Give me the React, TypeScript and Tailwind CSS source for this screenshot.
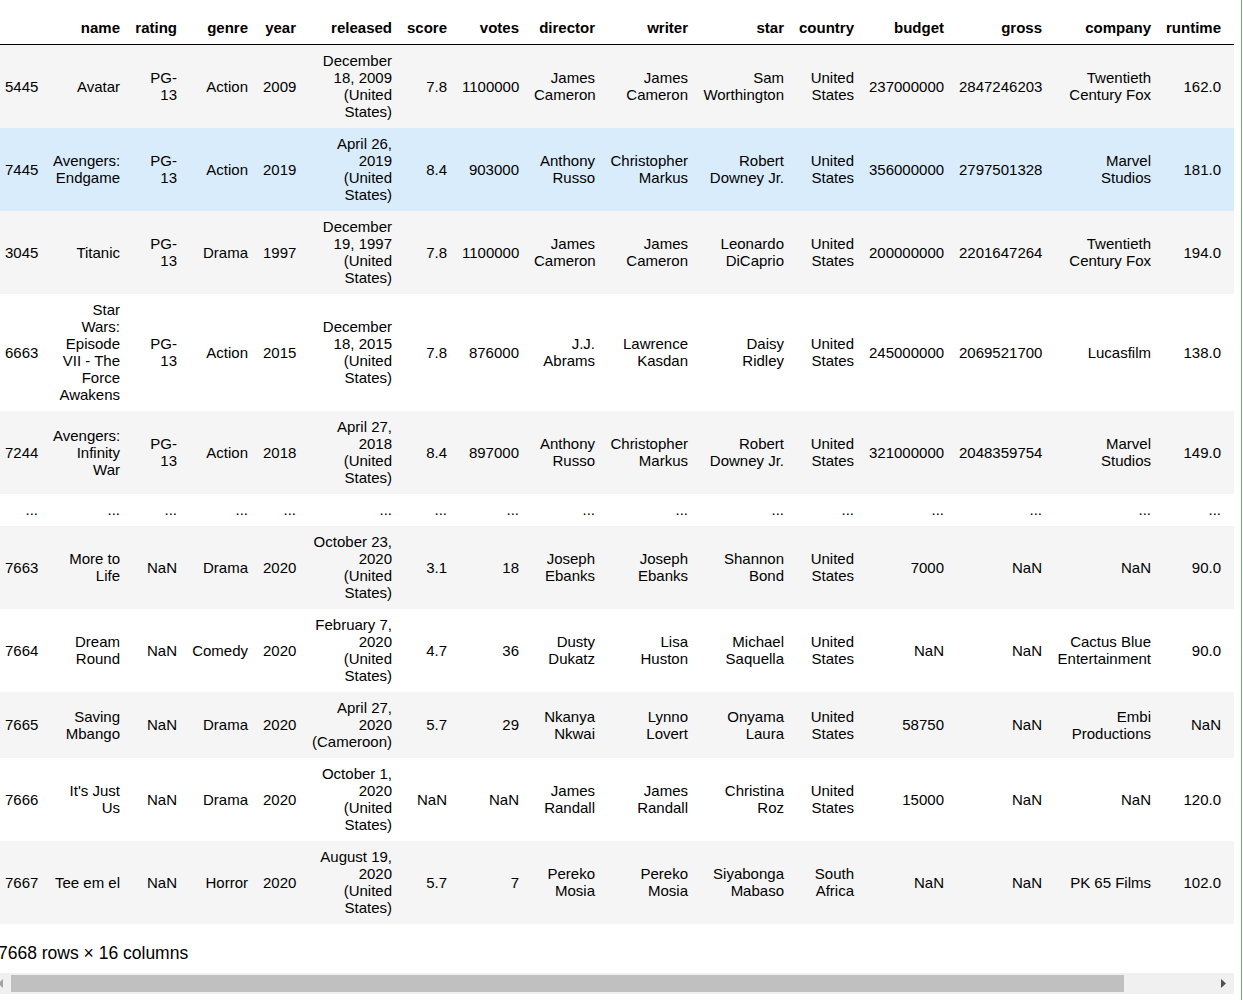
const widths = [45, 82, 57, 71, 48, 96, 55, 72, 76, 93, 96, 70, 90, 98, 109, 76];

const headers = ["", "name", "rating", "genre", "year", "released", "score", "votes", "director", "writer", "star", "country", "budget", "gross", "company", "runtime"];

const rows: string[][] = [
  ["5445", "Avatar", "PG-13", "Action", "2009", "December 18, 2009 (United States)", "7.8", "1100000", "James Cameron", "James Cameron", "Sam Worthington", "United States", "237000000", "2847246203", "Twentieth Century Fox", "162.0"],
  ["7445", "Avengers: Endgame", "PG-13", "Action", "2019", "April 26, 2019 (United States)", "8.4", "903000", "Anthony Russo", "Christopher Markus", "Robert Downey Jr.", "United States", "356000000", "2797501328", "Marvel Studios", "181.0"],
  ["3045", "Titanic", "PG-13", "Drama", "1997", "December 19, 1997 (United States)", "7.8", "1100000", "James Cameron", "James Cameron", "Leonardo DiCaprio", "United States", "200000000", "2201647264", "Twentieth Century Fox", "194.0"],
  ["6663", "Star Wars: Episode VII - The Force Awakens", "PG-13", "Action", "2015", "December 18, 2015 (United States)", "7.8", "876000", "J.J. Abrams", "Lawrence Kasdan", "Daisy Ridley", "United States", "245000000", "2069521700", "Lucasfilm", "138.0"],
  ["7244", "Avengers: Infinity War", "PG-13", "Action", "2018", "April 27, 2018 (United States)", "8.4", "897000", "Anthony Russo", "Christopher Markus", "Robert Downey Jr.", "United States", "321000000", "2048359754", "Marvel Studios", "149.0"],
  ["...", "...", "...", "...", "...", "...", "...", "...", "...", "...", "...", "...", "...", "...", "...", "..."],
  ["7663", "More to Life", "NaN", "Drama", "2020", "October 23, 2020 (United States)", "3.1", "18", "Joseph Ebanks", "Joseph Ebanks", "Shannon Bond", "United States", "7000", "NaN", "NaN", "90.0"],
  ["7664", "Dream Round", "NaN", "Comedy", "2020", "February 7, 2020 (United States)", "4.7", "36", "Dusty Dukatz", "Lisa Huston", "Michael Saquella", "United States", "NaN", "NaN", "Cactus Blue Entertainment", "90.0"],
  ["7665", "Saving Mbango", "NaN", "Drama", "2020", "April 27, 2020 (Cameroon)", "5.7", "29", "Nkanya Nkwai", "Lynno Lovert", "Onyama Laura", "United States", "58750", "NaN", "Embi Productions", "NaN"],
  ["7666", "It's Just Us", "NaN", "Drama", "2020", "October 1, 2020 (United States)", "NaN", "NaN", "James Randall", "James Randall", "Christina Roz", "United States", "15000", "NaN", "NaN", "120.0"],
  ["7667", "Tee em el", "NaN", "Horror", "2020", "August 19, 2020 (United States)", "5.7", "7", "Pereko Mosia", "Pereko Mosia", "Siyabonga Mabaso", "South Africa", "NaN", "NaN", "PK 65 Films", "102.0"],
];

function rowColor(i: number) {
  if (i === 1) return "bg-[#d9ecfc]";
  return i % 2 === 0 ? "bg-[#f5f5f5]" : "bg-white";
}

export default function App() {
  return (
    <div className="h-[1000px] w-[1242px] overflow-hidden border-r border-[#66bb6a] bg-white pt-[12px] font-['Liberation_Sans',Arial,sans-serif] text-[15px] leading-[17px] text-black">
      <table className="w-[1234px] table-fixed border-collapse">
        <colgroup>
          {widths.map((w, i) => (
            <col key={i} style={{ width: w }} />
          ))}
        </colgroup>
        <thead>
          <tr className="border-b border-black">
            {headers.map((h, i) => (
              <th key={i} className={`pt-[7px] pb-[8px] pl-[1px] text-right font-bold ${i === 15 ? "pr-[13px]" : "pr-[7px]"}`}>
                {h}
              </th>
            ))}
          </tr>
        </thead>
        <tbody>
          {rows.map((row, r) => (
            <tr key={r} className={rowColor(r)}>
              {row.map((c, i) => (
                <td
                  key={i}
                  className={`pt-[7px] pb-[8px] text-right align-middle ${i === 0 ? "pl-[5px]" : "pl-[8px]"} ${i === 15 ? "pr-[13px]" : "pr-[7px]"}`}
                >
                  {c}
                </td>
              ))}
            </tr>
          ))}
        </tbody>
      </table>
      <p className="mt-[19px] -ml-[2px] text-[17.5px] leading-[20px]">7668 rows × 16 columns</p>
      <div className="mt-[10px] flex h-[21px] w-[1234px] items-center bg-[#f0f0f0]">
        <div className="flex w-[11px] shrink-0 items-center">
          <svg width="5" height="9" viewBox="0 0 5 9" className="ml-[-2px]">
            <path d="M5 0L0 4.5L5 9z" fill="#a3a3a3" />
          </svg>
        </div>
        <div className="h-[17px] w-[1113px] bg-[#c0c0c0]" />
        <div className="flex flex-1 justify-end pr-[8px]">
          <svg width="5" height="9" viewBox="0 0 5 9">
            <path d="M0 0L5 4.5L0 9z" fill="#505050" />
          </svg>
        </div>
      </div>
    </div>
  );
}
